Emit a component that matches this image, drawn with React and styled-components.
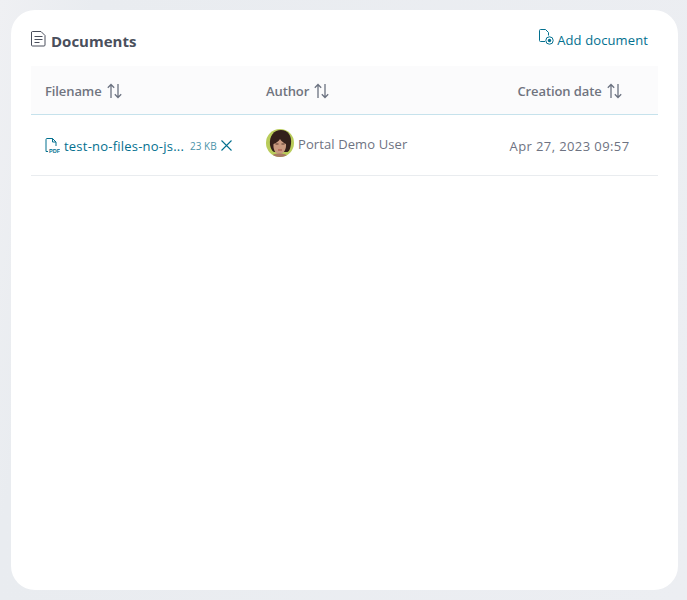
import React from 'react';
import styled, { createGlobalStyle } from 'styled-components';

const GlobalStyle = createGlobalStyle`
  html, body {
    margin: 0;
    height: 100%;
  }
  body {
    background: #eceef2;
    font-family: "Open Sans", "Noto Sans", "Liberation Sans", sans-serif;
    overflow: hidden;
  }
`;

const Page = styled.div`
  box-sizing: border-box;
  height: 600px;
  padding: 10px 9px 10px 11px;
  background: linear-gradient(100deg, #eff0f3 0%, #e9ecf0 12%, #eceef2 100%);
`;

const Card = styled.section`
  box-sizing: border-box;
  height: 580px;
  padding: 14px 20px 0;
  background: #fff;
  border-radius: 24px;
`;

const Header = styled.header`
  display: flex;
  align-items: flex-start;
  justify-content: space-between;
  height: 42px;
`;

const Title = styled.h2`
  display: flex;
  align-items: flex-start;
  gap: 5px;
  margin: 6px 0 0;
  font-size: 15px;
  line-height: 23px;
  font-weight: 700;
  color: #4a4f5c;

  svg {
    margin-top: 1px;
  }
`;

const AddLink = styled.a`
  display: flex;
  align-items: flex-start;
  gap: 3px;
  margin: 5px 10px 0 0;
  font-size: 13px;
  line-height: 22px;
  letter-spacing: 0.12px;
  color: #03708f;
  cursor: pointer;
`;

const Table = styled.table`
  width: 100%;
  border-collapse: collapse;
  table-layout: fixed;
`;

const HeadCell = styled.th`
  box-sizing: border-box;
  width: ${(p) => p.$width}px;
  height: 48px;
  padding: ${(p) => (p.$center ? '2px 0 0' : '2px 0 0 14px')};
  background: #fbfbfc;
  border-bottom: 1px solid #c6e2ec;
  text-align: ${(p) => (p.$center ? 'center' : 'left')};
  font-size: 13px;
  font-weight: 600;
  letter-spacing: -0.1px;
  color: #70747f;
`;

const HeadInner = styled.span`
  display: inline-flex;
  align-items: center;
  gap: 5px;
`;

const Cell = styled.td`
  box-sizing: border-box;
  height: 61px;
  padding: ${(p) => (p.$center ? '2px 0 0' : '0 0 0 14px')};
  border-bottom: 1px solid #e9ecef;
  text-align: ${(p) => (p.$center ? 'center' : 'left')};
  font-size: 13px;
  letter-spacing: 0.4px;
  color: #6e7382;
`;

const FileRow = styled.div`
  display: flex;
  align-items: center;
  margin-top: 2px;
  letter-spacing: 0;
  color: #03708f;
`;

const FileName = styled.a`
  margin-left: 4px;
  font-size: 13px;
  letter-spacing: 0.22px;
  white-space: nowrap;
  color: #03708f;
`;

const FileSize = styled.span`
  margin-left: 6px;
  font-size: 10px;
  white-space: nowrap;
  color: #4b93a9;
`;

const RemoveButton = styled.button`
  display: flex;
  margin-left: 3px;
  padding: 0;
  border: 0;
  background: none;
  cursor: pointer;
`;

const AuthorRow = styled.div`
  display: flex;
  align-items: center;
  gap: 4px;
  margin-top: -4px;
  font-size: 13px;
  letter-spacing: 0.1px;
  color: #6e7382;
`;

const AuthorName = styled.span`
  padding-top: 2px;
`;

const SortIcon = () => (
  <svg width="15" height="16" viewBox="0 0 15 16" fill="none" stroke="#6b7280" strokeWidth="1.3">
    <path d="M4 15V1.500M.8 4.700L4 1.500l3.200 3.200" />
    <path d="M11 1v13.500M7.800 11.300L11 14.500l3.200-3.200" />
  </svg>
);

const DocIcon = () => (
  <svg width="15" height="16" viewBox="0 0 15 16" fill="none" stroke="#4a4f5c" strokeWidth="1">
    <path d="M1.500.5h8.500l4 4v9.500a1 1 0 0 1-1 1H1.500a1 1 0 0 1-1-1v-13a1 1 0 0 1 1-.5z" />
    <path d="M3.500 5.500h8M3.500 8.500h8M3.500 11.500h5" />
  </svg>
);

const AddDocIcon = () => (
  <svg width="15" height="16" viewBox="0 0 15 16" fill="none" stroke="#03708f" strokeWidth="1">
    <path d="M6 12.500H1.500a1 1 0 0 1-1-1V1.500a1 1 0 0 1 1-1h5l3 3v3" />
    <circle cx="10.500" cy="11.500" r="3.700" />
    <circle cx="10.500" cy="11.500" r="1.700" fill="#03708f" stroke="none" />
  </svg>
);

const PdfIcon = () => (
  <svg width="15" height="16" viewBox="0 0 15 16" fill="none" stroke="#03708f" strokeWidth="1">
    <path d="M1 13.500V1.500a1 1 0 0 1 1-1h5.500l3.500 3.500v4" />
    <path d="M7.500.5V4H11" />
    <path d="M1 13.500h2" />
    <text x="4" y="15" fontSize="5.500" fontWeight="700" fill="#03708f" stroke="none" fontFamily="'Liberation Sans', sans-serif">PDF</text>
  </svg>
);

const CloseIcon = () => (
  <svg width="13" height="13" viewBox="0 0 13 13" fill="none" stroke="#03708f" strokeWidth="1.1">
    <path d="M1.500 1.500l10 10M11.500 1.500l-10 10" />
  </svg>
);

const Avatar = () => (
  <svg width="28" height="28" viewBox="0 0 28 28">
    <circle cx="14" cy="14" r="14" fill="#b9cc5a" />
    <clipPath id="avatar-clip">
      <circle cx="14" cy="14" r="14" />
    </clipPath>
    <g clipPath="url(#avatar-clip)">
      <path d="M4 16C3 7 8 1 15 1s11 6 10 14c-.5 4-1.500 7-3.500 8H8c-2-1-3.500-4-4-7z" fill="#33201b" />
      <path d="M7.500 15c2.500-1 5-2.500 6.500-5 1.500 2.500 4 4 6 5 .5 5-2 10-6.500 10s-6.500-5-6-10z" fill="#c99a80" />
      <path d="M9.500 15h3M15.500 15h3" stroke="#4a2c22" strokeWidth="0.9" />
      <path d="M12 21h4" stroke="#a3493f" strokeWidth="1" />
      <path d="M5 28c1-2.500 4-3.500 8.500-3.500s7.500 1 8.500 3.500z" fill="#a87a64" />
    </g>
  </svg>
);

export default function App() {
  return (
    <>
      <GlobalStyle />
      <Page>
        <Card>
          <Header>
            <Title>
              <DocIcon />
              Documents
            </Title>
            <AddLink>
              <AddDocIcon />
              Add document
            </AddLink>
          </Header>
          <Table>
            <thead>
              <tr>
                <HeadCell $width={221}>
                  <HeadInner>Filename <SortIcon /></HeadInner>
                </HeadCell>
                <HeadCell $width={229}>
                  <HeadInner>Author <SortIcon /></HeadInner>
                </HeadCell>
                <HeadCell $width={177} $center>
                  <HeadInner>Creation date <SortIcon /></HeadInner>
                </HeadCell>
              </tr>
            </thead>
            <tbody>
              <tr>
                <Cell>
                  <FileRow>
                    <PdfIcon />
                    <FileName>test-no-files-no-js...</FileName>
                    <FileSize>23 KB</FileSize>
                    <RemoveButton aria-label="Remove"><CloseIcon /></RemoveButton>
                  </FileRow>
                </Cell>
                <Cell>
                  <AuthorRow>
                    <Avatar />
                    <AuthorName>Portal Demo User</AuthorName>
                  </AuthorRow>
                </Cell>
                <Cell $center>Apr 27, 2023 09:57</Cell>
              </tr>
            </tbody>
          </Table>
        </Card>
      </Page>
    </>
  );
}
